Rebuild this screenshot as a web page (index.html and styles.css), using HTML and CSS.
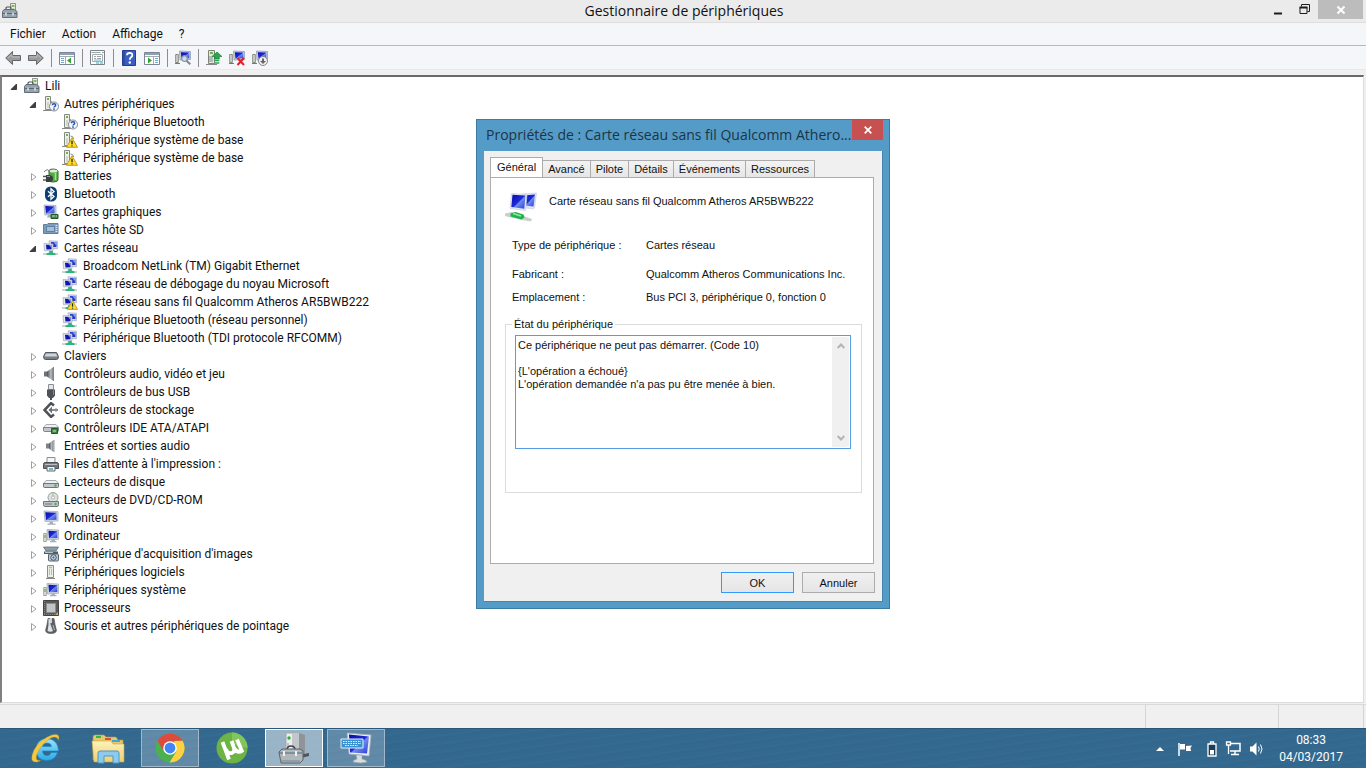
FILE: index.html
```html
<!DOCTYPE html>
<html lang="fr">
<head>
  <meta charset="UTF-8">
  <title>Gestionnaire de périphériques</title>
  <link rel="stylesheet" href="styles.css">
</head>
<body>
<svg class="defs" aria-hidden="true">
  <defs>
    <linearGradient id="screen" x1="0" y1="0" x2="1" y2="1">
      <stop offset="0" stop-color="#0a0aa8"/><stop offset=".5" stop-color="#1c2bd8"/><stop offset=".55" stop-color="#6f8bf0"/><stop offset="1" stop-color="#2a3bd6"/>
    </linearGradient>
    <linearGradient id="dark" x1="0" y1="0" x2="1" y2="0">
      <stop offset="0" stop-color="#4a4f54"/><stop offset=".6" stop-color="#b9bfc5"/><stop offset="1" stop-color="#6a7076"/>
    </linearGradient>
    <linearGradient id="iebl" x1="0" y1="0" x2="0" y2="1">
      <stop offset="0" stop-color="#9be4fb"/><stop offset="1" stop-color="#2ba9e4"/>
    </linearGradient>
    <linearGradient id="folder" x1="0" y1="0" x2="0" y2="1">
      <stop offset="0" stop-color="#fdf3bd"/><stop offset="1" stop-color="#f0cf6c"/>
    </linearGradient>
  </defs>
  <symbol id="i-tower" viewBox="0 0 16 16">
    <path d="M4.500 1.500h6v12h-6z" fill="#eceee8" stroke="#8a8f88"/>
    <path d="M6 3.500h3" stroke="#a9bf98" stroke-width="1.500"/><path d="M6.500 5v6M8.500 5v6" stroke="#b9c4b0"/>
    <path d="M3 14.500h9" stroke="#888" stroke-width="1"/>
  </symbol>
  <symbol id="i-devmgr" viewBox="0 0 16 16">
    <path d="M8.500.5h5v10h-5z" fill="#e8ebe4" stroke="#8d938c"/>
    <path d="M9.500 3h3" stroke="#7cc04a" stroke-width="2"/><path d="M11 5v4" stroke="#8fbf74"/>
    <path d="M4 7V5q0-1 1-1h3q1 0 1 1v2" fill="none" stroke="#4c555c" stroke-width="1.200"/>
    <path d="M.5 8.500L2 6.500h10.500l2.500 2v6H.5z" fill="#94a3ad" stroke="#626d75"/>
    <path d="M1 10.500h14" stroke="#5c676f"/><path d="M4 9.500v3M11 9.500v3" stroke="#dfe5e9" stroke-width="1.500"/>
  </symbol>
  <symbol id="i-unknown" viewBox="0 0 16 16">
    <path d="M2.500.5h5v13h-5z" fill="#eceee8" stroke="#858a84"/>
    <path d="M4 3h2" stroke="#6fb544" stroke-width="2"/><path d="M5 6v6" stroke="#b2bfa8"/><path d="M8.500 5v8" stroke="#9a9f9a"/><path d="M0 14.500h9" stroke="#888"/>
    <circle cx="11" cy="10.500" r="4.500" fill="#f4f7fc" stroke="#7d8794"/>
    <path d="M9.300 9.300q0-1.600 1.700-1.600t1.700 1.400q0 .9-1 1.400-.7.400-.7 1" fill="none" stroke="#2150b4" stroke-width="1.400"/><circle cx="11" cy="13.100" r=".9" fill="#2150b4"/>
  </symbol>
  <symbol id="warn" viewBox="0 0 10 9">
    <path d="M5 .6L9.600 8.500H.4z" fill="#ffdd22" stroke="#c09a10" stroke-width=".8" stroke-linejoin="round"/>
    <path d="M5 3v3" stroke="#222" stroke-width="1.100"/><circle cx="5" cy="7.300" r=".6" fill="#222"/>
  </symbol>
  <symbol id="i-towerwarn" viewBox="0 0 16 16">
    <path d="M2.500.5h5v13h-5z" fill="#eceee8" stroke="#858a84"/>
    <path d="M4 3h2" stroke="#6fb544" stroke-width="2"/><path d="M5 6v6" stroke="#b2bfa8"/><path d="M8.500 4q3 0 3 3" fill="none" stroke="#8a8f8a"/><path d="M0 14.500h9" stroke="#888"/>
    <use href="#warn" x="4" y="5" width="12" height="11"/>
  </symbol>
  <symbol id="i-battery" viewBox="0 0 16 16">
    <path d="M6 3q0-2 4-2t5 2v9q0 2-5 2t-4-2z" fill="#4fae3c" stroke="#3b6a35"/>
    <ellipse cx="10.500" cy="3" rx="4" ry="1.500" fill="#dfe9dc"/><path d="M12.500 5v7" stroke="#a8e38f" stroke-width="1.500"/>
    <path d="M1 4q4-5 6 1" fill="none" stroke="#777"/>
    <path d="M0 8.500h3M0 12h3" stroke="#555" stroke-width="1.400"/><path d="M3 7h3q4 0 4 3.500T6 14H3z" fill="#3a3f42"/><path d="M4 8.500h3" stroke="#999"/>
  </symbol>
  <symbol id="i-bluetooth" viewBox="0 0 16 16">
    <rect x="2" y=".5" width="12" height="15" rx="5.500" fill="#0e3e72"/>
    <path d="M5 5.200l6 5.300-3 2.700V2.800l3 2.700-6 5.300" fill="none" stroke="#fff" stroke-width="1.300"/>
  </symbol>
  <symbol id="i-monitor" viewBox="0 0 16 16">
    <path d="M1 1l14 .7v9.300L2 11.500z" fill="#d6dae2" stroke="#a5acb8" stroke-width=".8"/>
    <path d="M2.300 2.200l11.200.5v7L3 10.300z" fill="url(#screen)"/>
    <path d="M6.500 11.500h3.500v2h2.500v1.200H4.500v-1.200h2z" fill="#a9afb8"/>
  </symbol>
  <symbol id="i-gpu" viewBox="0 0 16 16">
    <path d="M1 1l12 .5v9L1.800 11z" fill="#d0d5de" stroke="#a5acb8" stroke-width=".8"/>
    <path d="M2.300 2l9.200.5v6.800L3 9.800z" fill="url(#screen)"/><path d="M5 11h3v2.500H4z" fill="#a9afb8"/>
    <path d="M8 10.500h7v4H8z" fill="#3f8d45" stroke="#21582a"/><path d="M9 12h3M13 12h1" stroke="#b9dcae"/>
  </symbol>
  <symbol id="i-sd" viewBox="0 0 16 16">
    <path d="M.5 2.500H4l1-1h10v10H.5z" fill="#7d9cbd" stroke="#5f7f9f"/>
    <path d="M3.500 4.500h8v5h-8z" fill="#a3bedb" stroke="#5f7f9f"/><path d="M13.500 3v8" stroke="#d9e6f2" stroke-dasharray="1 1" stroke-width="2"/>
  </symbol>
  <symbol id="netbody" viewBox="0 0 16 16">
    <path d="M6 .8l8.500.4v7.500L7 8.500z" fill="#d5dbe8" stroke="#9fa9ba" stroke-width=".7"/><path d="M8 2l5.500.3v4.700L8 7z" fill="#2734cf"/><path d="M10.500 2.200l3 .1v3.500z" fill="#8ba4f4"/>
    <path d="M1 3.500l9 .5v6.500l-8.500.3z" fill="#dfe4ee" stroke="#9fa9ba" stroke-width=".7"/><path d="M3 4.700l5.500.3v4.300L3.500 9.600z" fill="#0d16ad"/>
    <path d="M6 4.900l2.500.1v3z" fill="#7f9cf2"/><path d="M0 14h15" stroke="#b9c2bf" stroke-width="1.400"/>
    <path d="M6.200 11h3.600v1.500l2.700 1v1.500h-9v-1.500l2.700-1z" fill="#2eb67a"/>
  </symbol>
  <symbol id="i-net" viewBox="0 0 16 16"><use href="#netbody" width="16" height="16"/></symbol>
  <symbol id="i-netwarn" viewBox="0 0 16 16"><use href="#netbody" width="16" height="16"/><use href="#warn" x="5" y="6" width="11" height="10"/></symbol>
  <symbol id="i-keyboard" viewBox="0 0 16 16">
    <path d="M2.500 4.500h11l2 4q0 3-2 3h-11q-2 0-2-3z" fill="#777e86" stroke="#555b61"/><path d="M3 5.500h10l1.500 3h-13z" fill="#cfd4da"/>
  </symbol>
  <symbol id="i-speaker" viewBox="0 0 16 16">
    <path d="M1 5.500h3v5H1z" fill="#6b7279"/><path d="M4 5.500L10.500 1v14L4 10.500z" fill="url(#dark)"/><path d="M10.500 1v14" stroke="#7f868d"/>
  </symbol>
  <symbol id="i-speaker2" viewBox="0 0 16 16">
    <path d="M3 5.500h3v5H3z" fill="#7b8289"/><path d="M6 5.500L10.500 2v12L6 10.500z" fill="url(#dark)"/><path d="M11 2v12" stroke="#9aa0a6"/>
  </symbol>
  <symbol id="i-usb" viewBox="0 0 16 16">
    <path d="M5.500.5h5v5h-5z" fill="#e5e7ea" stroke="#8a8f95"/><path d="M4 5.500h8v6L10 14H6l-2-2.500z" fill="#4d5257"/><path d="M10.500 6v5" stroke="#858a90"/><path d="M8 14v2" stroke="#4d5257" stroke-width="2"/>
  </symbol>
  <symbol id="i-storage" viewBox="0 0 16 16">
    <path d="M11 3.500L8 1.200 1.500 8 8 14.800l3-2.300" fill="none" stroke="#4e5256" stroke-width="2.600"/>
    <path d="M6 8h9" stroke="#6b7075" stroke-width="1.600"/><path d="M5.500 8l3.500-3.500v7z" fill="#6b7075"/><path d="M13 6v4" stroke="#8b9095"/>
  </symbol>
  <symbol id="i-disk" viewBox="0 0 16 16">
    <path d="M3 6.500h10l2.500 3H.5z" fill="#eef0f1" stroke="#a6abb0"/><path d="M.5 9.500h15v3q0 1-1 1h-13q-1 0-1-1z" fill="#c2c7cb" stroke="#6e757b"/>
    <circle cx="12.500" cy="11.500" r="1.200" fill="#48b53a"/>
  </symbol>
  <symbol id="i-ide" viewBox="0 0 16 16">
    <path d="M3 4.500h10l2.500 3H.5z" fill="#eef0f1" stroke="#a6abb0"/><path d="M.5 7.500h15v3q0 1-1 1h-13q-1 0-1-1z" fill="#c2c7cb" stroke="#7e858b"/>
    <path d="M8.500 8.500h6v5h-6z" fill="#3f8d45" stroke="#21582a"/><path d="M10 11h3" stroke="#cfe9c6"/>
  </symbol>
  <symbol id="i-printer" viewBox="0 0 16 16">
    <path d="M4 1.500h8V7H4z" fill="#f5f6f7" stroke="#888e94"/><path d="M2 6.500h12q1.500 0 1.500 2v4H.5v-4q0-2 1.500-2z" fill="#73797f" stroke="#4c5156"/>
    <path d="M2 8.500h12" stroke="#b9bec3"/><path d="M4 10.500h8v4.500H4z" fill="#eef5f8" stroke="#666"/><path d="M6 13h4" stroke="#3aa6c9" stroke-width="1.500"/>
  </symbol>
  <symbol id="i-dvd" viewBox="0 0 16 16">
    <circle cx="10" cy="5.500" r="5" fill="#dde2e0" stroke="#9aa19d"/><circle cx="10" cy="5.500" r="1.500" fill="#fff" stroke="#999" stroke-width=".7"/><path d="M10 .5V4" stroke="#8cc98a"/>
    <path d="M.5 9.500h15v3q0 2-1.500 2H2q-1.500 0-1.500-2z" fill="#bfc5c9" stroke="#6e757b"/><path d="M2 12h7" stroke="#6e757b"/><circle cx="12.500" cy="12" r="1.200" fill="#48b53a"/>
  </symbol>
  <symbol id="i-computer" viewBox="0 0 16 16">
    <path d="M4 1.500l11.500.5v9.300L4.500 12z" fill="#d0d5de" stroke="#a5acb8" stroke-width=".8"/><path d="M5.500 2.700l8.800.5v6.800l-8.300.3z" fill="url(#screen)"/>
    <path d="M8.500 11.500H12v1.500h1.500v1.200H7V13h1.500z" fill="#a9afb8"/><path d="M.7 5.500h2.600v8H.7z" fill="#e4e8df" stroke="#8a8f88" stroke-width=".8"/><path d="M2 7v3" stroke="#6bb13e" stroke-width="1.300"/>
  </symbol>
  <symbol id="i-imaging" viewBox="0 0 16 16">
    <path d="M.5 1h15l-2.500 4H3z" fill="#8c9da8" stroke="#62717b" stroke-width=".8"/><path d="M1 5.500h14v2.500H1z" fill="#4e5b64"/><path d="M2 6.500h8" stroke="#b8c4cb"/>
    <rect x="5.500" y="8" width="10" height="7" rx="1" fill="#bcc6cd" stroke="#59656d"/><circle cx="10.500" cy="11.500" r="2.700" fill="#eef4f8" stroke="#3f4d56"/><circle cx="10.500" cy="11.500" r="1.200" fill="#2f79b9"/>
  </symbol>
  <symbol id="i-cpu" viewBox="0 0 16 16">
    <path d="M.5.5h15v15H.5z" fill="#5a5a57" stroke="#444"/><path d="M1 14.500h14M1.500 1v14" stroke="#85827a" stroke-dasharray="1 1"/>
    <path d="M3.500 3.500h9v9h-9z" fill="#c2c4c6" stroke="#8b8d90"/><path d="M12 15h3v-3z" fill="#d7b24c"/>
  </symbol>
  <symbol id="i-mouse" viewBox="0 0 16 16">
    <path d="M5 .5h6l1 6 1.500 6q-.5 3-5.500 3t-5.500-3L4 6.500z" fill="#5c6166" stroke="#4a4e52" stroke-width=".6"/>
    <path d="M5.500 1h1.300l.7 5.500L10 13q-2.500 1.500-5.500 0l1-6z" fill="#dfe3e6"/><path d="M7.300 0h1.400v5H7.300z" fill="#fff"/><path d="M10 7l1.500 5" stroke="#b4b9be"/>
  </symbol>
  <symbol id="t-back" viewBox="0 0 16 16"><path d="M.7 8L7.500 1.500v4h8v5h-8v4z" fill="#9b9b9b" stroke="#666"/><path d="M3 8l4-3.500V7h8" fill="none" stroke="#bcbcbc"/></symbol>
  <symbol id="t-fwd" viewBox="0 0 16 16"><path d="M15.300 8L8.500 1.500v4h-8v5h8v4z" fill="#9b9b9b" stroke="#666"/><path d="M13 8L9 4.500V7H1" fill="none" stroke="#bcbcbc"/></symbol>
  <symbol id="t-tree" viewBox="0 0 16 16">
    <path d="M.5 2.500h15v12H.5z" fill="#fff" stroke="#7b8794"/><path d="M1 4h14" stroke="#8fa0b4" stroke-width="2"/><path d="M1 6.500h14M6.500 7v7" stroke="#a3aab1"/><path d="M2 8.500h3M2 10.500h3M2 12.500h3" stroke="#7aa5cf"/><path d="M8 10.500l4-3v6z" fill="#2fa52f"/>
  </symbol>
  <symbol id="t-props" viewBox="0 0 16 16">
    <path d="M.5.500h14v14H.5z" fill="#fcfcfc" stroke="#7d8287"/><path d="M1.500 2.500h9M12 2.500h2" stroke="#9aa4ae"/><path d="M2.500 4.500h10v7h-10z" fill="#fff" stroke="#aaa"/><path d="M4 6.500h2M7 6.500h4M4 8.500h2M7 8.500h4M4 10h7" stroke="#8fa9b6"/><path d="M6 13h3M10 13h3" stroke="#2fb0c4"/>
  </symbol>
  <symbol id="t-help" viewBox="0 0 16 16">
    <path d="M1.500.5h13v15h-13z" fill="#3a5fc0" stroke="#243f8c"/><path d="M3 1v14" stroke="#22408f"/><path d="M6 5.300q0-2.300 2.700-2.300t2.600 2.200q0 1.400-1.500 2.200Q8.800 8 8.800 9.800" fill="none" stroke="#fff" stroke-width="1.800"/><circle cx="8.800" cy="12.500" r="1.200" fill="#fff"/>
  </symbol>
  <symbol id="t-action" viewBox="0 0 16 16">
    <path d="M.5 2.500h15v12H.5z" fill="#fff" stroke="#7b8794"/><path d="M1 4h14" stroke="#8fa0b4" stroke-width="2"/><path d="M1 6.500h14M9.500 7v7" stroke="#a3aab1"/><path d="M11 8.500h3M11 10.500h3M11 12.500h3" stroke="#7aa5cf"/><path d="M8 10.500l-4-3v6z" fill="#2fa52f"/>
  </symbol>
  <symbol id="pc" viewBox="0 0 16 16">
    <path d="M4.500 1l11 .5v8L5 10z" fill="#ccd3df" stroke="#939dac" stroke-width=".8"/><path d="M5.800 2.200l8.500.4v5.700l-7.800.4z" fill="url(#screen)"/>
    <path d="M.7 4.500h2.600v8H.7z" fill="#d3d9cc" stroke="#6c726a" stroke-width=".8"/><path d="M0 13.500h5" stroke="#777"/>
  </symbol>
  <symbol id="t-scan" viewBox="0 0 16 16"><use href="#pc" width="16" height="16"/><circle cx="9.500" cy="8.500" r="2.800" fill="#dcebf7" fill-opacity=".8" stroke="#8793a0" stroke-width="1.200"/><path d="M11.500 10.700l3.800 3.600" stroke="#7b8794" stroke-width="2"/></symbol>
  <symbol id="t-update" viewBox="0 0 16 16">
    <path d="M2.500.5h6v13h-6z" fill="#e5e9df" stroke="#7d837b"/><path d="M4 3h3" stroke="#6fb544" stroke-width="2"/><path d="M4 6v6M6 6v6M0 14.500h11" stroke="#888"/><path d="M11 2l5 4.500h-2.700v2.500H8.700V6.500H6z" fill="#2aa650" stroke="#137a35" stroke-width=".6"/><path d="M8.700 10.500h4.600M8.700 13h4.600" stroke="#2aa650" stroke-width="1.600"/>
  </symbol>
  <symbol id="t-remove" viewBox="0 0 16 16"><use href="#pc" width="16" height="16"/><path d="M8.500 8l6.500 7M15 8l-6.500 7" stroke="#e0202a" stroke-width="2"/></symbol>
  <symbol id="t-disable" viewBox="0 0 16 16"><use href="#pc" width="16" height="16"/><circle cx="11" cy="11" r="4.500" fill="#eee" stroke="#888"/><path d="M11 8.500v3" stroke="#666" stroke-width="2"/><path d="M8 11h6l-3 3z" fill="#666"/></symbol>
  <symbol id="caret-open" viewBox="0 0 8 8"><path d="M6.500 1v5.500H1z" fill="#404040" stroke="#262626" stroke-width=".8"/></symbol>
  <symbol id="caret-closed" viewBox="0 0 8 8"><path d="M2.500.500l4.500 3.500-4.500 3.500z" fill="#fff" stroke="#a0a0a0"/></symbol>
</svg>

<div class="desktop">
  <main class="window">
    <header class="titlebar">
      <svg class="icon"><use href="#i-devmgr"/></svg>
      <h1>Gestionnaire de périphériques</h1>
      <div class="winbuttons">
        <button type="button" aria-label="Réduire"><svg width="10" height="12"><path d="M1 9.500h8" stroke="#1c1c1c" stroke-width="2"/></svg></button>
        <button type="button" aria-label="Restaurer"><svg width="11" height="11"><path d="M2.500 2.500V.5h8v7h-2M1 3.500h7v6H1z" fill="none" stroke="#1c1c1c"/><path d="M.5 3.500h8" stroke="#1c1c1c" stroke-width="2"/></svg></button>
        <button type="button" class="close" aria-label="Fermer"><svg width="10" height="10"><path d="M1.500 1.500l7 7M8.500 1.500l-7 7" stroke="#fff" stroke-width="2"/></svg></button>
      </div>
    </header>
    <nav class="menubar">
      <button type="button">Fichier</button>
      <button type="button">Action</button>
      <button type="button">Affichage</button>
      <button type="button">?</button>
    </nav>
    <div class="toolbar">
      <button type="button" aria-label="Précédent"><svg class="icon"><use href="#t-back"/></svg></button>
      <button type="button" aria-label="Suivant"><svg class="icon"><use href="#t-fwd"/></svg></button>
      <span class="sep"></span>
      <button type="button" aria-label="Arborescence"><svg class="icon"><use href="#t-tree"/></svg></button>
      <span class="sep"></span>
      <button type="button" aria-label="Propriétés"><svg class="icon"><use href="#t-props"/></svg></button>
      <span class="sep"></span>
      <button type="button" aria-label="Aide"><svg class="icon"><use href="#t-help"/></svg></button>
      <button type="button" aria-label="Volet Actions"><svg class="icon"><use href="#t-action"/></svg></button>
      <span class="sep"></span>
      <button type="button" aria-label="Rechercher les modifications"><svg class="icon"><use href="#t-scan"/></svg></button>
      <span class="sep"></span>
      <button type="button" aria-label="Mettre à jour le pilote"><svg class="icon"><use href="#t-update"/></svg></button>
      <button type="button" aria-label="Désinstaller"><svg class="icon"><use href="#t-remove"/></svg></button>
      <button type="button" aria-label="Désactiver"><svg class="icon"><use href="#t-disable"/></svg></button>
    </div>
    <section class="tree">
      <ul>
        <li><div class="row"><svg class="caret"><use href="#caret-open"/></svg><svg class="icon"><use href="#i-devmgr"/></svg><span>Lili</span></div>
          <ul>
            <li><div class="row"><svg class="caret"><use href="#caret-open"/></svg><svg class="icon"><use href="#i-unknown"/></svg><span>Autres périphériques</span></div>
              <ul>
                <li><div class="row leaf"><svg class="icon"><use href="#i-unknown"/></svg><span>Périphérique Bluetooth</span></div></li>
                <li><div class="row leaf"><svg class="icon"><use href="#i-towerwarn"/></svg><span>Périphérique système de base</span></div></li>
                <li><div class="row leaf"><svg class="icon"><use href="#i-towerwarn"/></svg><span>Périphérique système de base</span></div></li>
              </ul>
            </li>
            <li><div class="row"><svg class="caret"><use href="#caret-closed"/></svg><svg class="icon"><use href="#i-battery"/></svg><span>Batteries</span></div></li>
            <li><div class="row"><svg class="caret"><use href="#caret-closed"/></svg><svg class="icon"><use href="#i-bluetooth"/></svg><span>Bluetooth</span></div></li>
            <li><div class="row"><svg class="caret"><use href="#caret-closed"/></svg><svg class="icon"><use href="#i-gpu"/></svg><span>Cartes graphiques</span></div></li>
            <li><div class="row"><svg class="caret"><use href="#caret-closed"/></svg><svg class="icon"><use href="#i-sd"/></svg><span>Cartes hôte SD</span></div></li>
            <li><div class="row"><svg class="caret"><use href="#caret-open"/></svg><svg class="icon"><use href="#i-net"/></svg><span>Cartes réseau</span></div>
              <ul>
                <li><div class="row leaf"><svg class="icon"><use href="#i-net"/></svg><span>Broadcom NetLink (TM) Gigabit Ethernet</span></div></li>
                <li><div class="row leaf"><svg class="icon"><use href="#i-net"/></svg><span>Carte réseau de débogage du noyau Microsoft</span></div></li>
                <li><div class="row leaf"><svg class="icon"><use href="#i-netwarn"/></svg><span>Carte réseau sans fil Qualcomm Atheros AR5BWB222</span></div></li>
                <li><div class="row leaf"><svg class="icon"><use href="#i-net"/></svg><span>Périphérique Bluetooth (réseau personnel)</span></div></li>
                <li><div class="row leaf"><svg class="icon"><use href="#i-net"/></svg><span>Périphérique Bluetooth (TDI protocole RFCOMM)</span></div></li>
              </ul>
            </li>
            <li><div class="row"><svg class="caret"><use href="#caret-closed"/></svg><svg class="icon"><use href="#i-keyboard"/></svg><span>Claviers</span></div></li>
            <li><div class="row"><svg class="caret"><use href="#caret-closed"/></svg><svg class="icon"><use href="#i-speaker"/></svg><span>Contrôleurs audio, vidéo et jeu</span></div></li>
            <li><div class="row"><svg class="caret"><use href="#caret-closed"/></svg><svg class="icon"><use href="#i-usb"/></svg><span>Contrôleurs de bus USB</span></div></li>
            <li><div class="row"><svg class="caret"><use href="#caret-closed"/></svg><svg class="icon"><use href="#i-storage"/></svg><span>Contrôleurs de stockage</span></div></li>
            <li><div class="row"><svg class="caret"><use href="#caret-closed"/></svg><svg class="icon"><use href="#i-ide"/></svg><span>Contrôleurs IDE ATA/ATAPI</span></div></li>
            <li><div class="row"><svg class="caret"><use href="#caret-closed"/></svg><svg class="icon"><use href="#i-speaker2"/></svg><span>Entrées et sorties audio</span></div></li>
            <li><div class="row"><svg class="caret"><use href="#caret-closed"/></svg><svg class="icon"><use href="#i-printer"/></svg><span>Files d'attente à l'impression :</span></div></li>
            <li><div class="row"><svg class="caret"><use href="#caret-closed"/></svg><svg class="icon"><use href="#i-disk"/></svg><span>Lecteurs de disque</span></div></li>
            <li><div class="row"><svg class="caret"><use href="#caret-closed"/></svg><svg class="icon"><use href="#i-dvd"/></svg><span>Lecteurs de DVD/CD-ROM</span></div></li>
            <li><div class="row"><svg class="caret"><use href="#caret-closed"/></svg><svg class="icon"><use href="#i-monitor"/></svg><span>Moniteurs</span></div></li>
            <li><div class="row"><svg class="caret"><use href="#caret-closed"/></svg><svg class="icon"><use href="#i-computer"/></svg><span>Ordinateur</span></div></li>
            <li><div class="row"><svg class="caret"><use href="#caret-closed"/></svg><svg class="icon"><use href="#i-imaging"/></svg><span>Périphérique d'acquisition d'images</span></div></li>
            <li><div class="row"><svg class="caret"><use href="#caret-closed"/></svg><svg class="icon"><use href="#i-tower"/></svg><span>Périphériques logiciels</span></div></li>
            <li><div class="row"><svg class="caret"><use href="#caret-closed"/></svg><svg class="icon"><use href="#i-computer"/></svg><span>Périphériques système</span></div></li>
            <li><div class="row"><svg class="caret"><use href="#caret-closed"/></svg><svg class="icon"><use href="#i-cpu"/></svg><span>Processeurs</span></div></li>
            <li><div class="row"><svg class="caret"><use href="#caret-closed"/></svg><svg class="icon"><use href="#i-mouse"/></svg><span>Souris et autres périphériques de pointage</span></div></li>
          </ul>
        </li>
      </ul>
    </section>
    <footer class="statusbar"><span></span><span></span><span></span></footer>
  </main>

  <section class="dialog" role="dialog" aria-labelledby="dialog-title">
    <header class="dialog-title">
      <h2 id="dialog-title">Propriétés de : Carte réseau sans fil Qualcomm Athero...</h2>
      <button type="button" aria-label="Fermer"><svg width="8" height="8"><path d="M.7.7l6.600 6.600M7.300.7L.7 7.300" stroke="#fff" stroke-width="1.700"/></svg></button>
    </header>
    <div class="dialog-body">
      <div class="tabs" role="tablist">
        <button type="button" role="tab" class="active" aria-selected="true">Général</button>
        <button type="button" role="tab">Avancé</button>
        <button type="button" role="tab">Pilote</button>
        <button type="button" role="tab">Détails</button>
        <button type="button" role="tab">Événements</button>
        <button type="button" role="tab">Ressources</button>
      </div>
      <div class="panel">
        <div class="device">
          <svg width="32" height="32" viewBox="0 0 32 32">
            <path d="M17 3l14.500-1-2 15-2 1-12-2z" fill="#dfe5f2" stroke="#c8d0e0" stroke-width=".7"/><path d="M19 4.500l11-1-1.500 12-9.500-1z" fill="url(#screen)"/>
            <path d="M6.500 2.500L22 3.500l-1.500 16L5 17.500z" fill="#e6eaf5" stroke="#c8d0e0" stroke-width=".7"/><path d="M7.500 3.700l13 .9-1.200 13.200L6.300 16z" fill="url(#screen)"/>
            <path d="M0 22.500l7-1.500 20 7-1 2.500-9-1.500-17-4z" fill="#c8cfcc"/><path d="M5.500 22.500l5-1.500 8 2.500 1 3-3 2-11-3z" fill="#1fb34a"/><path d="M8 22.500l8 2.500" stroke="#8eeba4" stroke-width="1.500"/>
          </svg>
          <span>Carte réseau sans fil Qualcomm Atheros AR5BWB222</span>
        </div>
        <dl class="facts">
          <dt>Type de périphérique :</dt><dd>Cartes réseau</dd>
          <dt>Fabricant :</dt><dd>Qualcomm Atheros Communications Inc.</dd>
          <dt>Emplacement :</dt><dd>Bus PCI 3, périphérique 0, fonction 0</dd>
        </dl>
        <fieldset>
          <legend><label for="state">État du périphérique</label></legend>
          <div class="state">
            <textarea id="state" readonly>Ce périphérique ne peut pas démarrer. (Code 10)

{L'opération a échoué}
L'opération demandée n'a pas pu être menée à bien.</textarea>
            <div class="scroll">
              <svg width="8" height="6"><path d="M.7 5L4 1.500 7.300 5" fill="none" stroke="#b4b4b4" stroke-width="2"/></svg>
              <svg width="8" height="6"><path d="M.7 1L4 4.500 7.300 1" fill="none" stroke="#b4b4b4" stroke-width="2"/></svg>
            </div>
          </div>
        </fieldset>
      </div>
      <div class="actions">
        <button type="button" class="default">OK</button>
        <button type="button">Annuler</button>
      </div>
    </div>
  </section>

  <footer class="taskbar">
    <div class="tasks">
      <button type="button" aria-label="Internet Explorer">
        <svg width="32" height="32" viewBox="0 0 32 32">
          <path d="M27.500 20.500Q25 28.500 16.500 28.500 6 28 6 17.500 7 7 16.500 6.500 28 7 28.500 19H12.500Q13 23.500 17 23.700q3 0 4-3.200zM12.500 14.500h9Q21 11 17 11q-4 .2-4.500 3.500z" fill="url(#iebl)" stroke="#1787c4" stroke-width=".6"/>
          <path d="M28.500 8Q30.500.5 22 3 10 7 4 18-1.500 30.500 6.500 30q2.500-.3 4-1.500-6 1-3.500-6.500Q11 12 20 6.500q6.500-3.500 8.500 1.500z" fill="#f5c842" stroke="#c99a1c" stroke-width=".4"/>
        </svg>
      </button>
      <button type="button" aria-label="Explorateur de fichiers">
        <svg width="34" height="32" viewBox="0 0 34 32">
          <path d="M2 5q0-2 2-2h9l2 2h10l2 3h5v20H2z" fill="#e7c769" stroke="#b9923a" stroke-width=".6"/><path d="M5 5h5" stroke="#36b44a" stroke-width="2"/><path d="M14 7h6" stroke="#d9512e" stroke-width="2"/><path d="M21 9h8" stroke="#3da7df" stroke-width="2"/>
          <path d="M1 9h19l2 3h11v18H3z" fill="url(#folder)" stroke="#c9a548" stroke-width=".6"/>
          <path d="M7 31V21q0-2 2-2h17q2 0 2 2v10h-6v-7h-9v7z" fill="#8ccbee" stroke="#4c98c9"/>
        </svg>
      </button>
      <button type="button" class="running" aria-label="Google Chrome">
        <svg width="30" height="30" viewBox="0 0 30 30">
          <circle cx="15" cy="15" r="14.500" fill="#4caf50"/><path d="M2.500 7.700A14.500 14.500 0 0 1 27.600 7.800L15 8 9 18.500z" fill="#dd4b3e"/><path d="M27.600 7.800A14.500 14.500 0 0 1 14.500 29.500L21.300 18.500 19 8z" fill="#fdd13f"/>
          <circle cx="15" cy="15" r="6.800" fill="#fff"/><circle cx="15" cy="15" r="5.400" fill="#4285f4"/>
        </svg>
      </button>
      <button type="button" aria-label="µTorrent">
        <svg width="32" height="32" viewBox="0 0 32 32">
          <circle cx="16" cy="16" r="15.500" fill="#6cb544"/><path d="M16 .5a15.500 15.500 0 0 1 15.500 15.500L16 12z" fill="#83c55d"/>
          <path d="M6.500 10l6.500 17.500M9.500 17q2.500 5 6.500 4 3.500-1.300 1.500-6.500L15.500 9M18 16q3 5.500 8 3M21 7.500l5.500 13" fill="none" stroke="#fff" stroke-width="3.800"/>
        </svg>
      </button>
      <button type="button" class="running current" aria-label="Gestionnaire de périphériques">
        <svg width="32" height="32" viewBox="0 0 32 32">
          <path d="M8 1h13v22H8z" fill="#eceeef" stroke="#a0a5a8"/><path d="M21 1l6 2v20l-6 1z" fill="#8f9498"/><path d="M14 1h7v22h-7z" fill="#c3c7ca"/><circle cx="11" cy="6" r="1.700" fill="#35ad35"/><path d="M10 11v6" stroke="#999"/>
          <path d="M22 23l9-2v3l-8 2z" fill="#4e5457"/><path d="M9 18q0-4 4-4t4 4" fill="none" stroke="#3c4347" stroke-width="1.500"/>
          <path d="M1 20l3-3h18l3 2v9l-3 3H3z" fill="#aeb7bb" stroke="#59636a"/><path d="M1 21h23" stroke="#5d676d"/><path d="M6 19v5M18 19v5" stroke="#eff2f4" stroke-width="2"/><path d="M2 29h20" stroke="#7a858b"/>
        </svg>
      </button>
      <button type="button" class="running" aria-label="Clavier visuel">
        <svg width="32" height="32" viewBox="0 0 32 32">
          <path d="M7 1l24 2-2 21-20-2z" fill="#eceff3" stroke="#a6adb5" stroke-width=".8"/><path d="M9 2.500l20 2-2 17-17-1z" fill="url(#screen)"/>
          <path d="M16 23h6v4q5 1 5 3-6 2-14 0 0-2 4-3z" fill="#d9dde1" stroke="#979ea6" stroke-width=".7"/>
          <path d="M1 7h22v9H1z" fill="#3a93cf" stroke="#e1eff8"/><path d="M3 9.500h18M3 11.500h18M5 13.500h13" stroke="#e9f5fc" stroke-dasharray="1.500 1"/>
        </svg>
      </button>
    </div>
    <div class="tray">
      <div class="tray-more">
        <svg width="8" height="5"><path d="M0 5l4-4 4 4z" fill="#fff"/></svg>
        <svg width="16" height="14"><path d="M2 1v13" stroke="#fff" stroke-width="1.500"/><path d="M3 2h5v5.500H3zM9 4l6-.5-1.500 2.500.5 3H9z" fill="#fff"/></svg>
      </div>
      <div class="tray-icons">
        <svg width="10" height="16"><path d="M1 3h8v12H1zM3.500 1h3v2h-3z" fill="#1b3d57" stroke="#fff" stroke-width="1.300"/><path d="M3 9h4v4.500H3z" fill="#fff"/></svg>
        <svg width="16" height="15"><path d="M6 2.500h9v7.500H5M10 10v3M6 13.500h8" fill="none" stroke="#fff" stroke-width="1.500"/><path d="M1.500 1h4v3h-4zM3.500 4v9" fill="none" stroke="#fff" stroke-width="1.300"/></svg>
        <svg width="16" height="14"><path d="M1 4.500h2.500L7.500.5v13l-4-4H1z" fill="#fff"/><path d="M9.500 4.500q1.500 2.500 0 5M11.500 2.500q3 4.500 0 9" fill="none" stroke="#fff"/></svg>
      </div>
      <time class="clock" datetime="2017-03-04T08:33"><span>08:33</span><span>04/03/2017</span></time>
    </div>
  </footer>
</div>
</body>
</html>
```
FILE: styles.css
```css
* {
  box-sizing: border-box;
}
body {
  margin: 0;
  font-family: Roboto, "Noto Sans", sans-serif;
  font-size: 12px;
  color: #111;
  overflow: hidden;
}
button {
  margin: 0;
  padding: 0;
  border: 0;
  background: none;
  font: inherit;
  color: inherit;
}
svg {
  display: block;
  flex: none;
}
h1, h2, ul, dl, dd {
  margin: 0;
  padding: 0;
}
h1, h2 {
  font-family: "Open Sans", "Noto Sans", sans-serif;
  font-size: 14px;
  font-weight: 400;
}
.defs {
  position: absolute;
  width: 0;
  height: 0;
}
.icon {
  width: 16px;
  height: 16px;
}
.desktop {
  height: 100vh;
  display: flex;
  flex-direction: column;
}

/* main window */
.window {
  flex: 1;
  min-height: 0;
  display: flex;
  flex-direction: column;
  background: #f0f0f0;
}
.titlebar {
  height: 23px;
  display: grid;
  grid-template-columns: 1fr auto 1fr;
  align-items: center;
  padding-left: 2px;
  background: #ebebeb;
  border-bottom: 1px solid #dedede;
}
.titlebar h1 {
  line-height: 22px;
}
.winbuttons {
  justify-self: end;
  align-self: start;
  display: flex;
  padding-right: 3px;
}
.winbuttons button {
  width: 26px;
  height: 19px;
  display: flex;
  align-items: center;
  justify-content: center;
}
.winbuttons .close {
  width: 45px;
  margin-left: 1px;
  background: #bcbcbc;
}
.menubar {
  height: 23px;
  display: flex;
  gap: 16px;
  padding-left: 10px;
  background: #f5f6f8;
  border-bottom: 1px solid #b3b9c4;
}
.toolbar {
  height: 24px;
  display: flex;
  align-items: center;
  gap: 7px;
  padding-left: 5px;
  background: #f4f6f9;
  border-bottom: 1px solid #e9e9e9;
}
.sep {
  width: 1px;
  height: 18px;
  background: #8d8d8d;
}
.tree {
  flex: 1;
  min-height: 0;
  margin: 5px 2px 0 0;
  padding-left: 6px;
  background: #fff;
  border: 1px solid #dcdcdc;
  border-top: 2px solid #696969;
  border-left: 2px solid #808080;
}
.tree ul {
  list-style: none;
}
.tree ul ul {
  padding-left: 19px;
}
.row {
  height: 18px;
  display: flex;
  align-items: center;
}
.row .caret {
  width: 8px;
  height: 8px;
  margin: 2px 6px 0 2px;
}
.row span {
  padding-left: 5px;
  line-height: 18px;
}
.leaf {
  padding-left: 16px;
}
.statusbar {
  height: 24px;
  display: flex;
  justify-content: flex-end;
  margin-top: 1px;
  padding-right: 2px;
  border-top: 1px solid #d9d9d9;
}
.statusbar span {
  width: 133px;
  border-right: 1px solid #d4d4d4;
}
.statusbar span:last-child {
  width: 85px;
}

/* properties dialog */
.dialog {
  position: absolute;
  left: 476px;
  top: 119px;
  width: 414px;
  display: flex;
  flex-direction: column;
  padding: 0 6px 6px 7px;
  background: #549bc8;
  border: 1px solid #3d7ba4;
  font-family: "Liberation Sans", sans-serif;
  font-size: 11px;
}
.dialog-title {
  height: 31px;
  display: flex;
  align-items: flex-start;
  justify-content: space-between;
}
.dialog-title h2 {
  padding-left: 2px;
  line-height: 30px;
  white-space: nowrap;
  color: #1c3546;
}
.dialog-title button {
  width: 31px;
  height: 20px;
  display: flex;
  align-items: center;
  justify-content: center;
  background: #c75050;
}
.dialog-body {
  display: flex;
  flex-direction: column;
  padding: 6px 7px 8px 6px;
  background: #f0f0f0;
  border: 1px solid #4686ae;
  border-width: 0 1px 1px 0;
}
.tabs {
  display: flex;
  align-items: flex-end;
}
.tabs button {
  height: 17px;
  padding: 0 5px;
  background: linear-gradient(#f3f3f3, #e6e6e6);
  border: 1px solid #acacac;
  border-width: 1px 1px 0 0;
}
.tabs .active {
  height: 21px;
  padding: 0 6px 2px;
  margin-bottom: -1px;
  background: #fff;
  border-left-width: 1px;
}
.panel {
  height: 387px;
  margin-right: 1px;
  padding: 13px 11px 0 14px;
  background: #fff;
  border: 1px solid #acacac;
}
.device {
  display: flex;
  gap: 12px;
  line-height: 20px;
}
.facts {
  display: grid;
  grid-template-columns: 134px 1fr;
  padding: 11px 0 0 7px;
  line-height: 23px;
}
.facts dt:first-child, .facts dt:first-child + dd {
  padding-bottom: 6px;
}
fieldset {
  height: 176px;
  margin: 8px 0 0;
  padding: 4px 10px 0 9px;
  border: 1px solid #dcdcdc;
}
legend {
  margin-left: -3px;
  padding: 0 2px;
  line-height: 14px;
}
.state {
  height: 114px;
  display: flex;
  padding: 1px;
  border: 1px solid #569de5;
}
textarea {
  flex: 1;
  padding: 2px 1px;
  border: 0;
  outline: 0;
  resize: none;
  overflow: hidden;
  background: #fff;
  font: inherit;
  line-height: 13px;
  color: inherit;
}
.scroll {
  width: 17px;
  display: flex;
  flex-direction: column;
  align-items: center;
  justify-content: space-between;
  padding: 6px 0;
  background: #f0f0f0;
}
.actions {
  display: flex;
  justify-content: flex-end;
  gap: 8px;
  padding-top: 8px;
}
.actions button {
  width: 73px;
  height: 21px;
  background: linear-gradient(#f0f0f0, #e5e5e5);
  border: 1px solid #acacac;
}
.actions .default {
  border-color: #3399ff;
}

/* taskbar */
.taskbar {
  height: 40px;
  display: flex;
  justify-content: space-between;
  padding: 0 23px 0 17px;
  background: repeating-linear-gradient(172deg, #34698f 0 3px, #366b91 3px 5px, #33678e 5px 8px);
  border-top: 1px solid #2a5778;
}
.tasks {
  display: flex;
  gap: 4px;
}
.tasks button {
  width: 58px;
  height: 38px;
  display: flex;
  align-items: center;
  justify-content: center;
}
.tasks .running {
  background: rgba(255, 255, 255, .22);
  border: 1px solid rgba(255, 255, 255, .4);
}
.tasks .current {
  background: rgba(255, 255, 255, .5);
  border: 1px solid #fff;
}
.tray, .tray-more, .tray-icons {
  display: flex;
  align-items: center;
}
.tray {
  gap: 14px;
}
.tray-more {
  gap: 13px;
}
.tray-icons {
  gap: 8px;
}
.clock {
  display: flex;
  flex-direction: column;
  align-items: center;
  line-height: 17px;
  color: #fff;
}
```
